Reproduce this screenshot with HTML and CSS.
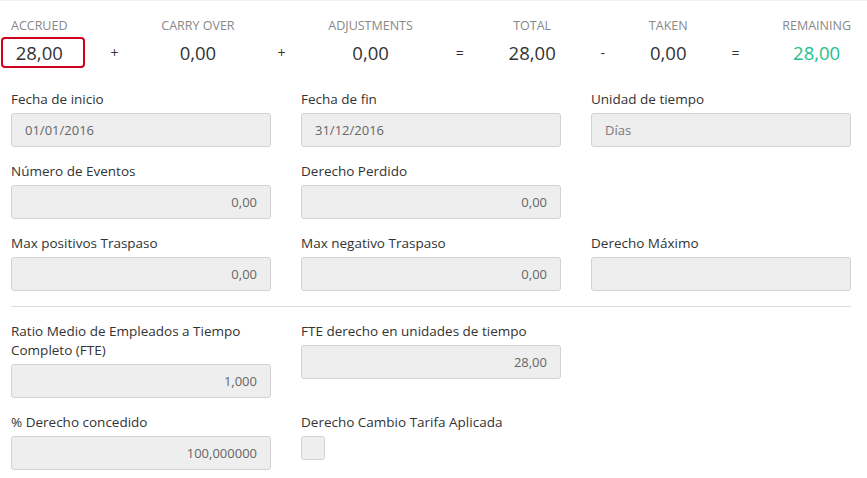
FILE: index.html
```html
<!DOCTYPE html>
<html lang="es">
<head>
<meta charset="utf-8">
<title>Derecho</title>
<link rel="stylesheet" href="styles.css">
</head>
<body>
<div class="page">
  <div class="summary">
    <div class="sum-item">
      <div class="sum-label">Accrued</div>
      <div class="sum-value highlight">28,00</div>
    </div>
    <div class="op">+</div>
    <div class="sum-item">
      <div class="sum-label">Carry over</div>
      <div class="sum-value">0,00</div>
    </div>
    <div class="op">+</div>
    <div class="sum-item">
      <div class="sum-label">Adjustments</div>
      <div class="sum-value">0,00</div>
    </div>
    <div class="op">=</div>
    <div class="sum-item">
      <div class="sum-label">Total</div>
      <div class="sum-value">28,00</div>
    </div>
    <div class="op">-</div>
    <div class="sum-item">
      <div class="sum-label">Taken</div>
      <div class="sum-value">0,00</div>
    </div>
    <div class="op">=</div>
    <div class="sum-item">
      <div class="sum-label">Remaining</div>
      <div class="sum-value positive">28,00</div>
    </div>
  </div>

  <div class="form">
    <div class="field">
      <label class="field-label">Fecha de inicio</label>
      <div class="input">01/01/2016</div>
    </div>
    <div class="field">
      <label class="field-label">Fecha de fin</label>
      <div class="input">31/12/2016</div>
    </div>
    <div class="field">
      <label class="field-label">Unidad de tiempo</label>
      <div class="input muted">Días</div>
    </div>

    <div class="field">
      <label class="field-label">Número de Eventos</label>
      <div class="input num">0,00</div>
    </div>
    <div class="field">
      <label class="field-label">Derecho Perdido</label>
      <div class="input num">0,00</div>
    </div>
    <div class="field"></div>

    <div class="field">
      <label class="field-label">Max positivos Traspaso</label>
      <div class="input num">0,00</div>
    </div>
    <div class="field">
      <label class="field-label">Max negativo Traspaso</label>
      <div class="input num">0,00</div>
    </div>
    <div class="field">
      <label class="field-label">Derecho Máximo</label>
      <div class="input num"></div>
    </div>

    <div class="divider"></div>

    <div class="field">
      <label class="field-label">Ratio Medio de Empleados a Tiempo Completo (FTE)</label>
      <div class="input num">1,000</div>
    </div>
    <div class="field">
      <label class="field-label">FTE derecho en unidades de tiempo</label>
      <div class="input num">28,00</div>
    </div>
    <div class="field"></div>

    <div class="field">
      <label class="field-label">% Derecho concedido</label>
      <div class="input num">100,000000</div>
    </div>
    <div class="field">
      <label class="field-label">Derecho Cambio Tarifa Aplicada</label>
      <div class="checkbox"></div>
    </div>
    <div class="field"></div>
  </div>
</div>
</body>
</html>
```

FILE: styles.css
```css
* {
  box-sizing: border-box;
}

html, body {
  margin: 0;
  padding: 0;
  background: #ffffff;
}

body {
  font-family: "Open Sans", "Liberation Sans", sans-serif;
  color: #333333;
  border-top: 1px solid #f2f2f2;
}

.page {
  padding: 16px 16px 0 11px;
}

.summary {
  display: flex;
  justify-content: space-between;
  align-items: flex-end;
}

.sum-item {
  display: flex;
  flex-direction: column;
  align-items: center;
}

.sum-label {
  font-size: 12.5px;
  line-height: 17px;
  color: #888888;
  text-transform: uppercase;
  margin-bottom: 3px;
}

.sum-value {
  font-size: 18.5px;
  line-height: 27px;
  color: #333333;
  border: 2px solid transparent;
  border-radius: 4px;
}

.sum-value.highlight {
  border-color: #d0021b;
  padding: 0 20px 0 13px;
  margin: 0 -22px 0 -15px;
}

.sum-value.positive {
  color: #1ebf8e;
}

.op {
  font-size: 14px;
  line-height: 31px;
  height: 31px;
  color: #333333;
}

.form {
  display: grid;
  grid-template-columns: 260px 260px 260px;
  justify-content: space-between;
  row-gap: 15px;
  margin-top: 22px;
}

.field {
  display: flex;
  flex-direction: column;
}

.field-label {
  font-size: 13.5px;
  line-height: 19px;
  color: #333333;
  margin-bottom: 4px;
}

.input {
  height: 34px;
  line-height: 32px;
  background: #eeeeee;
  border: 1px solid #d2d2d2;
  border-radius: 3px;
  padding: 0 13px;
  font-size: 13px;
  color: #666666;
}

.input.num {
  text-align: right;
}

.input.muted {
  color: #7a7a7a;
}

.checkbox {
  width: 24px;
  height: 24px;
  background: #eeeeee;
  border: 1px solid #d2d2d2;
  border-radius: 3px;
}

.divider {
  grid-column: 1 / -1;
  height: 1px;
  background: #dddddd;
}
```
